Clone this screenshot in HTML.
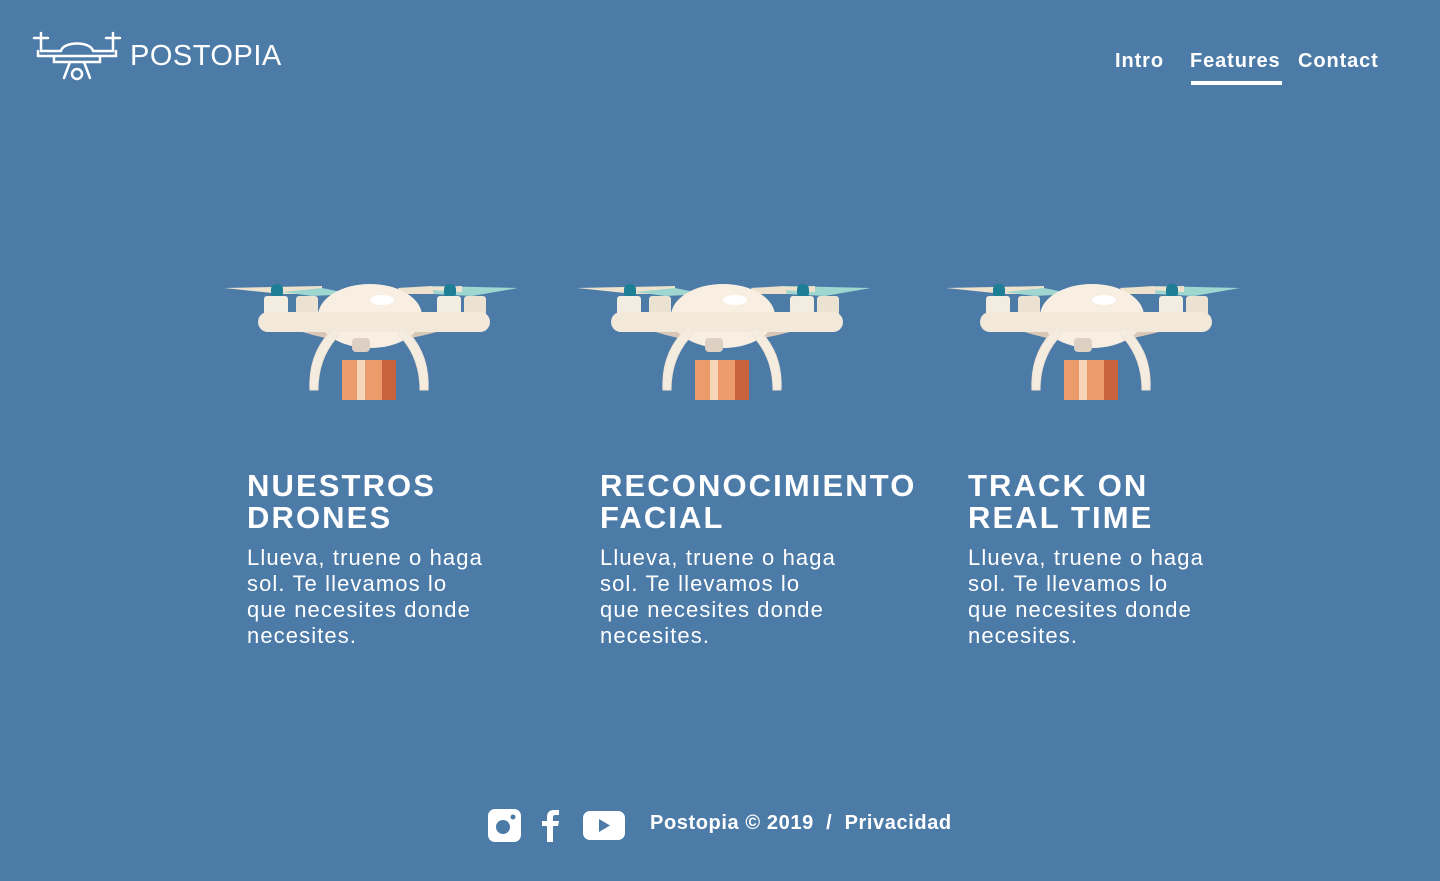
<!DOCTYPE html>
<html><head><meta charset="utf-8"><style>
body{margin:0;width:1440px;height:881px;background:#4c7ba8;font-family:"Liberation Sans",sans-serif;color:#fff;position:relative;overflow:hidden}
.abs{position:absolute}
.nav{font-weight:bold;font-size:20px;top:50px;letter-spacing:0.9px}
h2{margin:0;font-size:31px;line-height:32px;font-weight:900;letter-spacing:2.1px}
.col{position:absolute;top:470px;width:360px}
.col p{margin:11px 0 0;font-size:22px;line-height:26px;width:238px;letter-spacing:1.1px}
</style></head><body>
<svg class="abs" style="left:32px;top:30px" width="90" height="54" viewBox="0 0 90 54" fill="none" stroke="#fff" stroke-width="2.5" stroke-linecap="round">
<path d="M2 8h14M9 3v10M74 8h14M81 3v10"/>
<path d="M9 13v8h20M81 13v8H61M29 21c2-10 30-10 32 0M6 26h78v-5M6 26v-5M22 26v6h46v-6M38 32l-6 16M52 32l6 16"/>
<circle cx="45" cy="44" r="5"/>
</svg>
<div class="abs" style="left:130px;top:40px;font-size:29px;letter-spacing:0.5px">POSTOPIA</div>
<div class="abs nav" style="left:1115px">Intro</div>
<div class="abs nav" style="left:1190px">Features</div>
<div class="abs" style="left:1191px;top:81px;width:91px;height:4px;background:#fff"></div>
<div class="abs nav" style="left:1298px">Contact</div>

<svg width="0" height="0" style="position:absolute"><defs>
<g id="d">
<path d="M2 6 L100 4 L100 12 L60 12 Z" fill="#efe2cc"/>
<path d="M60 10 L100 6 L130 12 L90 14 Z" fill="#9fd6d0"/>
<path d="M176 6 L210 4 L212 12 L180 12 Z" fill="#efe2cc"/>
<path d="M210 4 L296 6 L250 14 L212 12 Z" fill="#9fd6d0"/>
<path d="M176 6 L240 4 L240 10 Z" fill="#efe2cc"/>
<rect x="49" y="2" width="12" height="14" rx="5" fill="#1d7f96"/>
<rect x="222" y="2" width="12" height="14" rx="5" fill="#1d7f96"/>
<rect x="42" y="14" width="24" height="22" rx="3" fill="#f3ece0"/>
<rect x="74" y="14" width="22" height="20" rx="3" fill="#ebe2d4"/>
<rect x="215" y="14" width="24" height="22" rx="3" fill="#f3ece0"/>
<rect x="242" y="14" width="22" height="20" rx="3" fill="#ebe2d4"/>
<path d="M60 42 Q140 78 240 42" fill="#d8c6b6"/>
<ellipse cx="148" cy="34" rx="52" ry="32" fill="#f8efe2"/>
<rect x="36" y="30" width="232" height="20" rx="10" fill="#f3e9db"/>
<rect x="130" y="56" width="18" height="14" rx="4" fill="#ddd0c2"/>
<path d="M112 46 Q86 70 88 108 L96 108 Q96 74 118 52" fill="#f5ece0" stroke="#efe3d3"/>
<path d="M182 46 Q208 70 206 108 L198 108 Q198 74 176 52" fill="#f5ece0" stroke="#efe3d3"/>
<rect x="120" y="78" width="54" height="40" fill="#ec9c6a"/>
<rect x="135" y="78" width="8" height="40" fill="#f7d5b8"/>
<rect x="160" y="78" width="14" height="40" fill="#c9633f"/>
<ellipse cx="160" cy="18" rx="12" ry="5" fill="#fff"/>
</g></defs></svg>
<svg class="abs" style="left:222px;top:282px" width="300" height="120"><use href="#d"/></svg>
<svg class="abs" style="left:575px;top:282px" width="300" height="120"><use href="#d"/></svg>
<svg class="abs" style="left:944px;top:282px" width="300" height="120"><use href="#d"/></svg>

<div class="col" style="left:247px"><h2>NUESTROS<br>DRONES</h2><p>Llueva, truene o haga sol. Te llevamos lo que necesites donde necesites.</p></div>
<div class="col" style="left:600px"><h2>RECONOCIMIENTO<br>FACIAL</h2><p>Llueva, truene o haga sol. Te llevamos lo que necesites donde necesites.</p></div>
<div class="col" style="left:968px"><h2>TRACK ON<br>REAL TIME</h2><p>Llueva, truene o haga sol. Te llevamos lo que necesites donde necesites.</p></div>

<svg class="abs" style="left:488px;top:809px" width="33" height="33" viewBox="0 0 33 33"><rect width="33" height="33" rx="7" fill="#fff"/><circle cx="15" cy="18" r="7" fill="#4c7ba8"/><circle cx="25" cy="8" r="2.5" fill="#4c7ba8"/></svg>
<svg class="abs" style="left:541px;top:810px" width="20" height="32" viewBox="0 0 20 32"><path d="M6 32V16H1v-5h5V7c0-5 3-7 7-7h5v5h-4c-1 0-2 1-2 2v4h6l-1 5h-5v16z" fill="#fff"/></svg>
<svg class="abs" style="left:583px;top:811px" width="42" height="29" viewBox="0 0 42 29"><rect width="42" height="29" rx="7" fill="#fff"/><path d="M16 8l11 6.5L16 21z" fill="#4c7ba8"/></svg>
<div class="abs" style="left:650px;top:812px;font-size:20px;font-weight:bold;letter-spacing:0.6px">Postopia © 2019 &nbsp;/&nbsp; Privacidad</div>
</body></html>
